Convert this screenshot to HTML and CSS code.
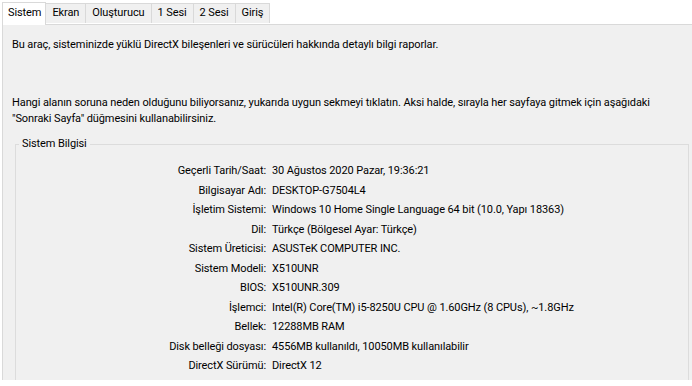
FILE: index.html
```html
<!DOCTYPE html>
<html lang="tr">
<head>
  <meta charset="UTF-8" />
  <title>DirectX Tanı Aracı</title>
  <meta name="viewport" content="width=device-width, initial-scale=1.0" />
  <link rel="stylesheet" href="styles.css">
</head>
<body>

  <div class="tabs">
    <div class="tab active">Sistem</div>
    <div class="tab">Ekran</div>
    <div class="tab">Oluşturucu</div>
    <div class="tab">1 Sesi</div>
    <div class="tab">2 Sesi</div>
    <div class="tab">Giriş</div>
  </div>

  <div class="panel">
    <p class="intro">Bu araç, sisteminizde yüklü DirectX bileşenleri ve sürücüleri hakkında detaylı bilgi raporlar.</p>
    <p class="hint">Hangi alanın soruna neden olduğunu biliyorsanız, yukarıda uygun sekmeyi tıklatın. Aksi halde, sırayla her sayfaya gitmek için aşağıdaki "Sonraki Sayfa" düğmesini kullanabilirsiniz.</p>

    <fieldset class="group">
      <legend>Sistem Bilgisi</legend>
      <div class="info">
        <span class="label">Geçerli Tarih/Saat:</span><span>30 Ağustos 2020 Pazar, 19:36:21</span>
        <span class="label">Bilgisayar Adı:</span><span>DESKTOP-G7504L4</span>
        <span class="label">İşletim Sistemi:</span><span>Windows 10 Home Single Language 64 bit (10.0, Yapı 18363)</span>
        <span class="label">Dil:</span><span>Türkçe (Bölgesel Ayar: Türkçe)</span>
        <span class="label">Sistem Üreticisi:</span><span>ASUSTeK COMPUTER INC.</span>
        <span class="label">Sistem Modeli:</span><span>X510UNR</span>
        <span class="label">BIOS:</span><span>X510UNR.309</span>
        <span class="label">İşlemci:</span><span>Intel(R) Core(TM) i5-8250U CPU @ 1.60GHz (8 CPUs), ~1.8GHz</span>
        <span class="label">Bellek:</span><span>12288MB RAM</span>
        <span class="label">Disk belleği dosyası:</span><span>4556MB kullanıldı, 10050MB kullanılabilir</span>
        <span class="label">DirectX Sürümü:</span><span>DirectX 12</span>
      </div>
    </fieldset>
  </div>

</body>
</html>
```
FILE: styles.css
```css
:root {
  --panel-bg: #f0f0f0;
  --line: #d9d9d9;
}

body {
  margin: 0;
  width: 692px;
  height: 386px;
  overflow: hidden;
  background: #fff;
  font-family: Roboto, "Liberation Sans", sans-serif;
  font-size: 11px;
  letter-spacing: -0.1px;
  color: #000;
}

.tabs {
  display: flex;
  align-items: flex-end;
  height: 24px;
  padding-left: 2px;
  position: relative;
  z-index: 1;
}

.tab {
  height: 19px;
  line-height: 18px;
  padding: 0 6px;
  background: var(--panel-bg);
  border: 1px solid var(--line);
  border-left: none;
  border-bottom: none;
  margin-bottom: 1px;
}

.tab:first-child {
  border-left: 1px solid var(--line);
}

.tab.active {
  height: 22px;
  line-height: 20px;
  background: #fff;
  margin-bottom: -1px;
  padding: 0 4px 0 5px;
}

.panel {
  margin-left: 2px;
  height: 356px;
  box-sizing: border-box;
  overflow: hidden;
  background: var(--panel-bg);
  border-top: 1px solid var(--line);
  border-left: 1px solid var(--line);
  padding: 12px 3px 0 9px;
}

.panel p {
  margin: 0;
  line-height: 16px;
}

.hint {
  margin-top: 42px !important;
  padding-right: 30px;
}

.group {
  margin: 10px 0 0 3px;
  padding: 0 0 40px 0;
  border: 1px solid #dcdcdc;
}

.group legend {
  margin-left: 3px;
  padding: 0 3px;
  line-height: 14px;
}

.info {
  display: grid;
  grid-template-columns: 250px 1fr;
  column-gap: 6px;
  grid-auto-rows: 19.5px;
  align-items: center;
  padding-top: 10px;
}

.info .label {
  text-align: right;
}
```
